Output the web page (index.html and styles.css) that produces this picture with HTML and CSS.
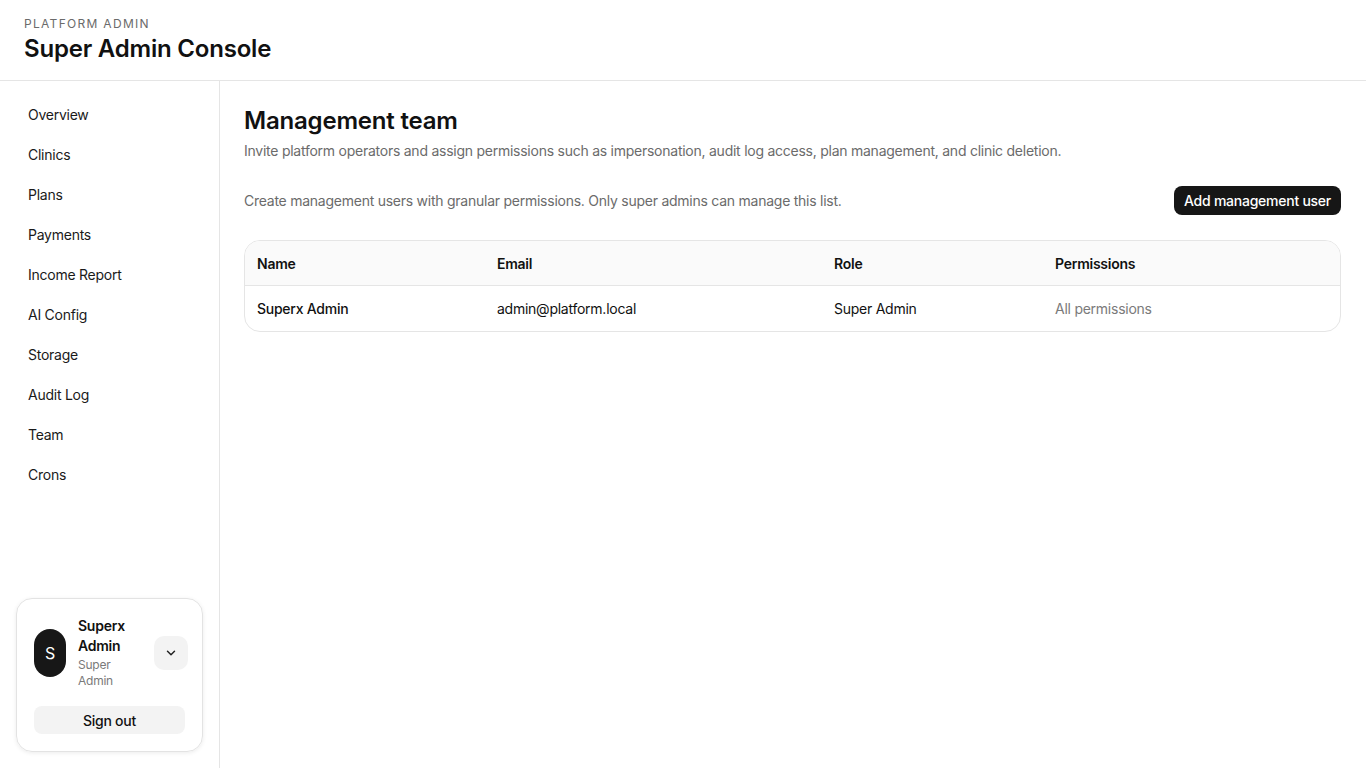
FILE: index.html
```html
<!DOCTYPE html>
<html lang="en">
<head>
    <meta charset="UTF-8">
    <meta name="viewport" content="width=device-width, initial-scale=1.0">
    <title>Super Admin Console - Team</title>
    <link rel="stylesheet" href="styles.css">
</head>
<body>
    <header class="topbar">
        <div class="eyebrow">PLATFORM ADMIN</div>
        <h1 class="console-title">Super Admin Console</h1>
    </header>

    <div class="shell">
        <aside class="sidebar">
            <nav class="nav">
                <a href="javascript:;">Overview</a>
                <a href="javascript:;">Clinics</a>
                <a href="javascript:;">Plans</a>
                <a href="javascript:;">Payments</a>
                <a href="javascript:;">Income Report</a>
                <a href="javascript:;">AI Config</a>
                <a href="javascript:;">Storage</a>
                <a href="javascript:;">Audit Log</a>
                <a href="javascript:;">Team</a>
                <a href="javascript:;">Crons</a>
            </nav>

            <div class="user-card">
                <div class="user-row">
                    <div class="avatar">S</div>
                    <div class="user-info">
                        <div class="user-name">Superx Admin</div>
                        <div class="user-role">Super Admin</div>
                    </div>
                    <button class="chevron-btn" type="button">
                        <svg width="14" height="14" viewBox="0 0 24 24" fill="none" stroke="currentColor" stroke-width="2.5" stroke-linecap="round" stroke-linejoin="round"><path d="M6 9l6 6 6-6"/></svg>
                    </button>
                </div>
                <button class="signout-btn" type="button">Sign out</button>
            </div>
        </aside>

        <main class="main">
            <h2 class="page-title">Management team</h2>
            <p class="page-sub">Invite platform operators and assign permissions such as impersonation, audit log access, plan management, and clinic deletion.</p>

            <div class="toolbar">
                <p class="toolbar-text">Create management users with granular permissions. Only super admins can manage this list.</p>
                <button class="primary-btn" type="button">Add management user</button>
            </div>

            <div class="table">
                <div class="table-row table-head">
                    <div>Name</div>
                    <div>Email</div>
                    <div>Role</div>
                    <div>Permissions</div>
                </div>
                <div class="table-row">
                    <div class="cell-strong">Superx Admin</div>
                    <div>admin@platform.local</div>
                    <div>Super Admin</div>
                    <div class="cell-muted">All permissions</div>
                </div>
            </div>
        </main>
    </div>
</body>
</html>
```

FILE: styles.css
```css
*{
    margin: 0px;
    padding: 0px;
    box-sizing: border-box;
}

body{
    font-family: Inter, "Liberation Sans", sans-serif;
    color: #111;
    background-color: #fff;
    height: 100vh;
    display: flex;
    flex-direction: column;
    letter-spacing: -0.25px;
}

/* top header */
.topbar{
    padding: 16px 24px 15px;
    border-bottom: 1px solid #e5e5e5;
}

.eyebrow{
    font-size: 12px;
    letter-spacing: 1.3px;
    color: #6b6b6b;
    line-height: 16px;
}

.console-title{
    font-size: 24px;
    font-weight: 600;
    line-height: 32px;
    letter-spacing: -0.2px;
    margin-top: 1px;
}

.shell{
    flex: 1;
    display: flex;
    min-height: 0;
}

/* sidebar */
.sidebar{
    width: 220px;
    border-right: 1px solid #e5e5e5;
    padding: 16px;
    display: flex;
    flex-direction: column;
    justify-content: space-between;
}

.nav{
    display: flex;
    flex-direction: column;
    gap: 4px;
}

.nav a{
    display: block;
    height: 36px;
    line-height: 36px;
    padding: 0 12px;
    font-size: 14px;
    color: #1a1a1a;
    text-decoration: none;
    border-radius: 8px;
}

.nav a:hover{
    background-color: #f4f4f4;
}

.user-card{
    border: 1px solid #e3e3e3;
    border-radius: 16px;
    box-shadow: 0 1px 4px rgba(0, 0, 0, 0.08);
    padding: 17px;
    display: flex;
    flex-direction: column;
    gap: 17px;
}

.user-row{
    display: flex;
    align-items: center;
    gap: 12px;
    margin-right: -3px;
}

.avatar{
    width: 32px;
    height: 48px;
    border-radius: 16px;
    background-color: #171717;
    color: #fff;
    font-size: 16px;
    display: flex;
    align-items: center;
    justify-content: center;
    flex-shrink: 0;
}

.user-info{
    flex: 1;
    min-width: 0;
}

.user-name{
    font-size: 14px;
    font-weight: 600;
    line-height: 20px;
}

.user-role{
    font-size: 12px;
    color: #7a7a7a;
    line-height: 16px;
    margin-top: 1px;
}

.chevron-btn{
    width: 34px;
    height: 34px;
    border: none;
    border-radius: 10px;
    background-color: #f3f3f3;
    color: #222;
    display: flex;
    align-items: center;
    justify-content: center;
    flex-shrink: 0;
}

.signout-btn{
    height: 28px;
    border: none;
    border-radius: 8px;
    background-color: #f3f3f3;
    font-family: inherit;
    font-size: 14px;
    font-weight: 500;
    letter-spacing: -0.25px;
    color: #111;
}

/* main content */
.main{
    flex: 1;
    padding: 24px 25px 24px 24px;
}

.page-title{
    font-size: 24px;
    font-weight: 600;
    line-height: 32px;
    letter-spacing: -0.2px;
}

.page-sub{
    font-size: 14px;
    color: #6b6b6b;
    line-height: 20px;
    margin-top: 4px;
}

.toolbar{
    display: flex;
    align-items: center;
    justify-content: space-between;
    margin-top: 25px;
}

.toolbar-text{
    font-size: 14px;
    color: #6b6b6b;
    line-height: 20px;
}

.primary-btn{
    height: 29px;
    padding: 0 10px;
    border: none;
    border-radius: 8px;
    background-color: #161616;
    color: #fff;
    font-family: inherit;
    font-size: 14px;
    font-weight: 500;
    letter-spacing: -0.25px;
}

.table{
    margin-top: 25px;
    border: 1px solid #e5e5e5;
    border-radius: 16px;
    overflow: hidden;
}

.table-row{
    display: grid;
    grid-template-columns: 240px 337px 221px 1fr;
    height: 45px;
    align-items: center;
    padding: 0 12px;
    font-size: 14px;
}

.table-head{
    background-color: #fafafa;
    border-bottom: 1px solid #e5e5e5;
    font-weight: 600;
}

.cell-strong{
    font-weight: 500;
}

.cell-muted{
    color: #7a7a7a;
}
```
